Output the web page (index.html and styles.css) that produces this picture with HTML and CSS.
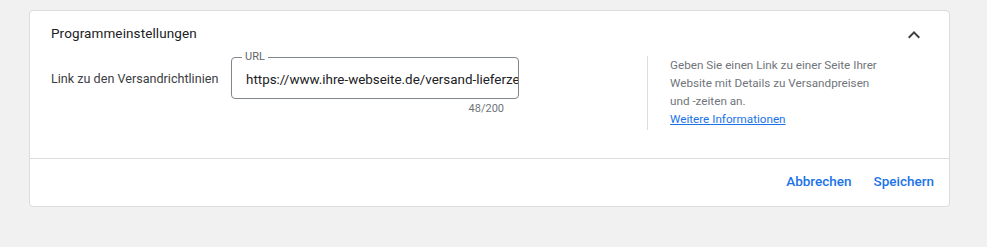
FILE: index.html
```html
<!DOCTYPE html>
<html lang="de">
<head>
    <meta charset="UTF-8">
    <title>Programmeinstellungen</title>
    <link rel="stylesheet" href="styles.css">
</head>
<body>

    <div class="card">
        <div class="card-body">
            <div class="card-header">
                <h2>Programmeinstellungen</h2>
                <svg class="chevron" width="24" height="24" viewBox="0 0 24 24">
                    <path d="M7.41 15.41 12 10.83l4.59 4.58L18 14l-6-6-6 6z" fill="#3c4043"/>
                </svg>
            </div>

            <div class="setting-row">
                <div class="setting-label">Link zu den Versandrichtlinien</div>

                <div class="field-wrap">
                    <fieldset class="field">
                        <legend>URL</legend>
                        <input type="text" value="https://www.ihre-webseite.de/versand-lieferzeiten-info">
                    </fieldset>
                    <div class="counter">48/200</div>
                </div>

                <div class="help">
                    Geben Sie einen Link zu einer Seite Ihrer Website mit Details zu Versandpreisen und -zeiten an.
                    <a href="#">Weitere Informationen</a>
                </div>
            </div>
        </div>

        <div class="card-footer">
            <button type="button" class="text-button">Abbrechen</button>
            <button type="button" class="text-button">Speichern</button>
        </div>
    </div>

</body>
</html>
```

FILE: styles.css
```css
body {
    font-family: Roboto, "Noto Sans", sans-serif;
    margin: 0;
    padding: 10px 0 0 29px;
    background: #f1f1f1;
    color: #3c4043;
}

.card {
    width: 919px;
    background: white;
    border: 1px solid #dadce0;
    border-radius: 4px;
}

.card-body {
    padding: 10px 22px 0 21px;
    height: 137px;
    border-bottom: 1px solid #dadce0;
}

.card-header {
    display: flex;
    align-items: center;
    justify-content: space-between;
    height: 24px;
}

.card-header h2 {
    margin: 0;
    font-size: 13.5px;
    font-weight: 400;
    color: #202124;
    letter-spacing: 0.1px;
}

.chevron {
    margin-top: 4px;
    margin-right: 1px;
}

.setting-row {
    display: flex;
    align-items: flex-start;
    margin-top: 12px;
}

.setting-label {
    width: 180px;
    font-size: 12.6px;
    line-height: 20px;
    margin-top: 12px;
}

.field-wrap {
    width: 288px;
}

.field {
    margin: 0;
    padding: 0 0 0 14px;
    height: 48px;
    box-sizing: border-box;
    border: 1px solid #80868b;
    border-radius: 4px;
    margin-top: -6px;
}

.field legend {
    font-size: 11px;
    color: #5f6368;
    padding: 0 3px;
    margin-left: -4px;
    line-height: 12px;
}

.field input {
    width: 100%;
    border: none;
    outline: none;
    padding: 0;
    margin-top: 9px;
    font-family: Roboto, sans-serif;
    font-size: 13.4px;
    color: #202124;
    background: transparent;
}

.counter {
    text-align: right;
    font-size: 11px;
    color: #70757a;
    padding-right: 15px;
    margin-top: 3px;
}

.help {
    margin-left: 128px;
    border-left: 1px solid #dadce0;
    padding: 0 0 2px 22px;
    width: 215px;
    font-size: 11.7px;
    line-height: 18px;
    color: #70757a;
    margin-top: -1px;
}

.help a {
    display: block;
    color: #1a73e8;
}

.card-footer {
    display: flex;
    justify-content: flex-end;
    align-items: center;
    height: 44px;
    padding: 0 7px 3px 0;
    gap: 6px;
}

.text-button {
    background: none;
    border: none;
    padding: 6px 8px;
    font-family: Roboto, sans-serif;
    font-size: 13.5px;
    font-weight: 500;
    color: #1a73e8;
    cursor: pointer;
}
```
